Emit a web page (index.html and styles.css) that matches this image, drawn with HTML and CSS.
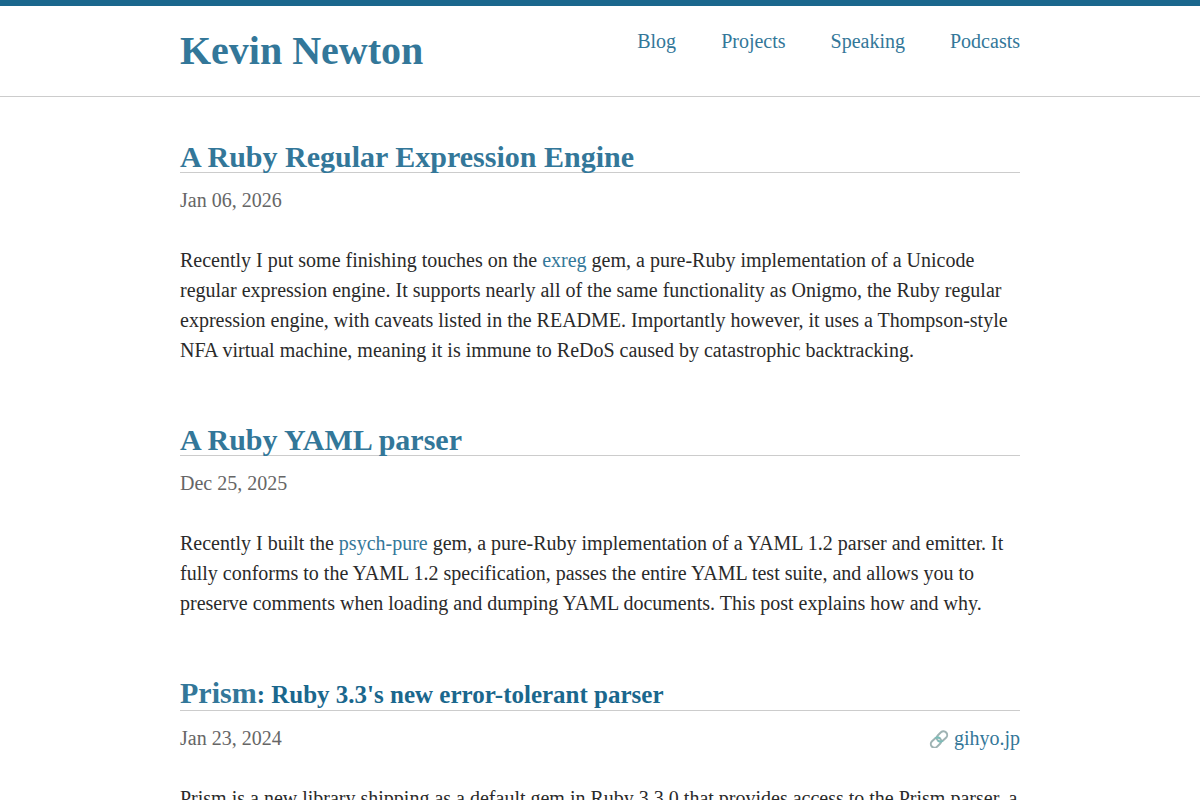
FILE: index.html
```html
<!DOCTYPE html>
<html lang="en">
<head>
	<meta charset="utf-8">
	<meta name="viewport" content="width=device-width, initial-scale=1">
	<title>Kevin Newton</title>
	<link rel="stylesheet" href="styles.css">
</head>
<body>
	<header class="site-header">
		<div class="wrap header-inner">
			<h1 class="site-title"><a href="#">Kevin Newton</a></h1>
			<nav class="site-nav">
				<a href="#">Blog</a>
				<a href="#">Projects</a>
				<a href="#">Speaking</a>
				<a href="#">Podcasts</a>
			</nav>
		</div>
	</header>
	<main class="wrap posts">
		<article class="post">
			<h2 class="post-title"><a href="#">A Ruby Regular Expression Engine</a></h2>
			<div class="post-meta"><time datetime="2026-01-06">Jan 06, 2026</time></div>
			<p>Recently I put some finishing touches on the <a href="#">exreg</a> gem, a pure-Ruby implementation of a Unicode regular expression engine. It supports nearly all of the same functionality as Onigmo, the Ruby regular expression engine, with caveats listed in the README. Importantly however, it uses a Thompson-style NFA virtual machine, meaning it is immune to ReDoS caused by catastrophic backtracking.</p>
		</article>
		<article class="post">
			<h2 class="post-title"><a href="#">A Ruby YAML parser</a></h2>
			<div class="post-meta"><time datetime="2025-12-25">Dec 25, 2025</time></div>
			<p>Recently I built the <a href="#">psych-pure</a> gem, a pure-Ruby implementation of a YAML 1.2 parser and emitter. It fully conforms to the YAML 1.2 specification, passes the entire YAML test suite, and allows you to preserve comments when loading and dumping YAML documents. This post explains how and why.</p>
		</article>
		<article class="post">
			<h2 class="post-title"><a href="#">Prism<small>: Ruby 3.3's new error-tolerant parser</small></a></h2>
			<div class="post-meta">
				<time datetime="2024-01-23">Jan 23, 2024</time>
				<a class="source" href="#">
					<svg class="link-icon" viewBox="0 0 20 20" aria-hidden="true">
						<g transform="rotate(-43 10 11.5)" fill="none" stroke-width="2">
							<rect x="0" y="8" width="11.5" height="7.4" rx="3.7" stroke="#9fb3b3"/>
							<rect x="8.5" y="7.6" width="11.5" height="7.4" rx="3.7" stroke="#9fb3b3"/>
							<path d="M8 8Q11.5 8.5 11.5 11.7" stroke="#7cbdb9"/>
							<path d="M8.5 11.3Q8.5 14.5 12 15" stroke="#7cbdb9"/>
						</g>
					</svg>
					gihyo.jp
				</a>
			</div>
			<p>Prism is a new library shipping as a default gem in Ruby 3.3.0 that provides access to the Prism parser, a</p>
		</article>
	</main>
</body>
</html>
```
FILE: styles.css
```css
body {
	margin: 0;
	border-top: 6px solid #1a678d;
	font-family: "Liberation Serif", "Times New Roman", serif;
	font-size: 20px;
	line-height: 30px;
	color: #2a2a2a;
}
a {
	color: #337799;
	text-decoration: none;
}
.wrap {
	max-width: 840px;
	margin: 0 auto;
	padding: 0 20px;
}
.site-header {
	border-bottom: 1px solid #ccc;
}
.header-inner {
	display: flex;
	justify-content: space-between;
	align-items: flex-start;
	padding-top: 20px;
	padding-bottom: 20px;
}
.site-title {
	margin: 0;
	font-size: 40px;
	line-height: 50px;
}
.site-nav {
	display: flex;
	gap: 45px;
}
.posts {
	padding-top: 45px;
}
.post {
	margin-bottom: 60px;
}
.post-title {
	margin: 0 0 12px;
	border-bottom: 1px solid #ccc;
	font-size: 30px;
	line-height: 30px;
}
.post-title small {
	font-size: 25px;
	color: #1a678d;
}
.post-meta {
	display: flex;
	justify-content: space-between;
	color: #666;
}
.source {
	display: flex;
	align-items: center;
	gap: 5px;
}
.link-icon {
	width: 20px;
	height: 20px;
}
.post p {
	margin: 30px 0 0;
}
```
